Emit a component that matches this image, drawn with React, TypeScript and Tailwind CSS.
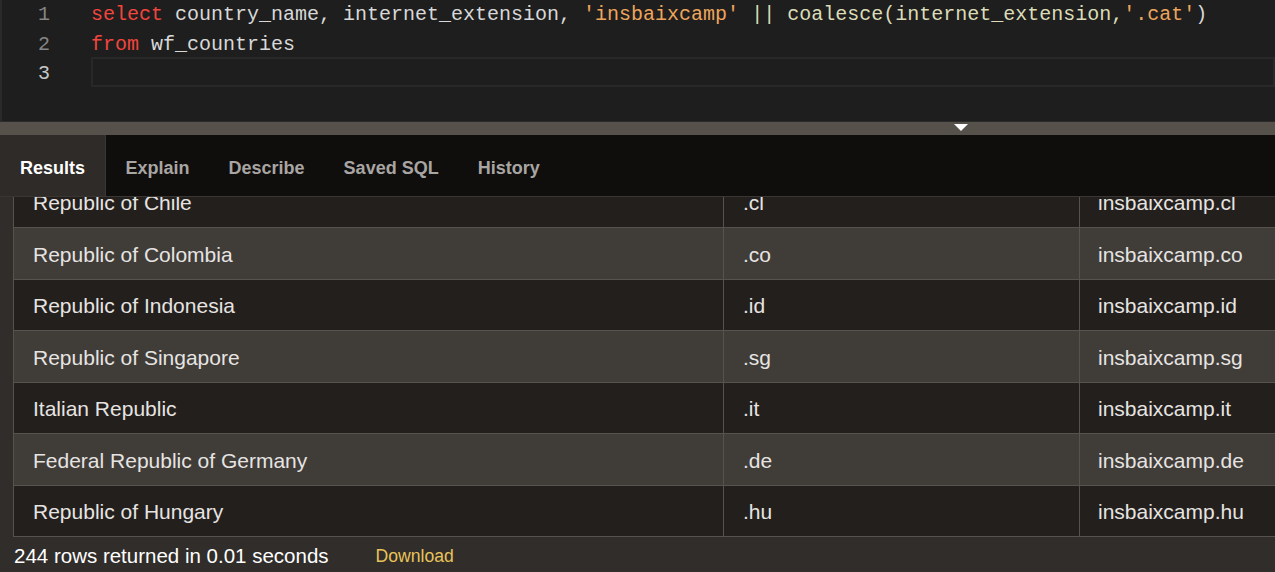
import React from 'react';

const rows = [
  { name: 'Republic of Chile', ext: '.cl' },
  { name: 'Republic of Colombia', ext: '.co' },
  { name: 'Republic of Indonesia', ext: '.id' },
  { name: 'Republic of Singapore', ext: '.sg' },
  { name: 'Italian Republic', ext: '.it' },
  { name: 'Federal Republic of Germany', ext: '.de' },
  { name: 'Republic of Hungary', ext: '.hu' },
];

const tabs = ['Results', 'Explain', 'Describe', 'Saved SQL', 'History'];

const mono = { fontFamily: '"Liberation Mono", "DejaVu Sans Mono", monospace' };
const sans = { fontFamily: '"Liberation Sans", Arial, sans-serif' };

const Editor = () => {
  return (
    <div className="h-[121px] bg-[#1e1e1e] border-l-2 border-[#2a2a2a] overflow-hidden text-[20px]" style={mono}>
      <div className="flex">
        <div className="w-[48px] text-right leading-[29.5px] text-[#858585]">
          <div>1</div>
          <div>2</div>
          <div className="text-[#c6c6c6]">3</div>
        </div>
        <div className="flex-1 ml-[41px] leading-[29.5px] whitespace-pre">
          <div>
            <span className="text-[#f2453d]">select</span>
            <span className="text-[#d8d8d8]"> country_name, internet_extension, </span>
            <span className="text-[#eda55c]">'insbaixcamp'</span>
            <span className="text-[#dcdcb8]"> || coalesce(internet_extension,</span>
            <span className="text-[#eda55c]">'.cat'</span>
            <span className="text-[#d8d8d8]">)</span>
          </div>
          <div>
            <span className="text-[#f2453d]">from</span>
            <span className="text-[#d8d8d8]"> wf_countries</span>
          </div>
          <div className="h-[30px] -mt-[2px] border-2 border-[#282828]" />
        </div>
      </div>
    </div>
  );
};

const Splitter = () => (
  <div className="relative h-[14px] bg-[#56514b] border-t border-[#2b2b2b]">
    <div className="absolute left-[954px] top-[2px] w-0 h-0 border-l-[7px] border-r-[7px] border-t-[7px] border-l-transparent border-r-transparent border-t-white" />
  </div>
);

const TabBar = () => (
  <div className="h-[62px] bg-[#0f0e0d] border-b border-[#3a3633] flex text-[18px] font-bold" style={sans}>
    {tabs.map((t, i) => (
      <div
        key={t}
        className={
          i === 0
            ? 'flex items-center pt-[5px] px-[20px] bg-[#2e2b29] text-white border-r border-[#3a3633]'
            : 'flex items-center pt-[5px] px-[19.5px] text-[#a8a5a2]'
        }
      >
        {t}
      </div>
    ))}
  </div>
);

const ResultsGrid = () => (
  <div className="flex-1 overflow-hidden pl-[13px]">
    <div className="-mt-[20.5px] border-l border-[#57524d] text-[21px] text-[#e6e4e2]" style={sans}>
      {rows.map((r, i) => (
        <div
          key={r.ext}
          className={`flex h-[51.5px] pt-[2px] border-b border-[#57524d] ${i % 2 === 0 ? 'bg-[#231f1c]' : 'bg-[#403c38]'}`}
        >
          <div className="w-[710px] flex items-center pl-[19px] border-r border-[#57524d] -mt-[2px] pt-[2px]">{r.name}</div>
          <div className="w-[356px] flex items-center pl-[19px] border-r border-[#57524d] -mt-[2px] pt-[2px]">{r.ext}</div>
          <div className="flex-1 flex items-center pl-[18px]">insbaixcamp{r.ext}</div>
        </div>
      ))}
    </div>
  </div>
);

export default function App() {
  return (
    <div className="w-[1275px] h-[572px] bg-[#312d2a] flex flex-col overflow-hidden">
      <Editor />
      <Splitter />
      <TabBar />
      <ResultsGrid />
      <div className="h-[35px] shrink-0 flex items-center pt-[3px] pl-[14px] text-[20.5px]" style={sans}>
        <span className="text-white">244 rows returned in 0.01 seconds</span>
        <span className="ml-[47px] text-[#e8c35a] text-[17.6px]">Download</span>
      </div>
    </div>
  );
}
